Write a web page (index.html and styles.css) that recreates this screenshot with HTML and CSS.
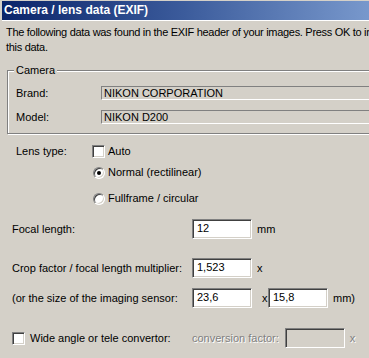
FILE: index.html
```html
<!DOCTYPE html>
<html lang="en">
  <head>
    <meta charset="UTF-8" />
    <meta name="viewport" content="width=device-width, initial-scale=1.0" />
    <title>Camera / lens data (EXIF)</title>
    <link rel="stylesheet" href="styles.css">
  </head>
  <body>
    <div class="dialog">
      <div class="title">Camera / lens data (EXIF)</div>
      <div class="intro">
        The following data was found in the EXIF header of your images. Press OK to import<br>
        this data.
      </div>

      <fieldset class="group">
        <legend>Camera</legend>
        <div class="row">
          <span class="row-label">Brand:</span>
          <span class="field">NIKON CORPORATION</span>
        </div>
        <div class="row">
          <span class="row-label">Model:</span>
          <span class="field">NIKON D200</span>
        </div>
      </fieldset>

      <div class="lens">
        <span class="lens-label">Lens type:</span>
        <div class="options">
          <div class="opt"><span class="check"></span>Auto</div>
          <div class="opt opt-2"><span class="radio"><span class="dot"></span></span>Normal (rectilinear)</div>
          <div class="opt opt-3"><span class="radio"></span>Fullframe / circular</div>
        </div>
      </div>

      <div class="form">
        <div class="frow">
          <span class="flabel">Focal length:</span>
          <span class="input">12</span>
          <span class="unit">mm</span>
        </div>
        <div class="frow frow-crop">
          <span class="flabel">Crop factor / focal length multiplier:</span>
          <span class="input">1,523</span>
          <span class="unit">x</span>
        </div>
        <div class="frow frow-sensor">
          <span class="flabel">(or the size of the imaging sensor:</span>
          <span class="input">23,6</span>
          <span class="times">x</span>
          <span class="input">15,8</span>
          <span class="unit">mm)</span>
        </div>
        <div class="frow frow-wide">
          <span class="flabel"><span class="check check-wide"></span>Wide angle or tele convertor:</span>
          <span class="disabled">conversion factor:</span>
          <span class="input input-off"></span>
          <span class="unit disabled">x</span>
        </div>
      </div>
    </div>
  </body>
</html>
```

FILE: styles.css
```css
* {
  box-sizing: border-box;
}
html,
body {
  margin: 0;
  width: 369px;
  height: 358px;
  overflow: hidden;
  background: #d4d0c8;
}
body {
  font: 11px/13px "Liberation Sans", Arial, sans-serif;
  color: #000;
}
.dialog {
  width: 369px;
  height: 358px;
  overflow: hidden;
}
.title {
  margin: 1px 0 0 2px;
  height: 20px;
  padding-left: 2px;
  line-height: 19px;
  font-size: 12px;
  font-weight: bold;
  color: #fff;
  background: linear-gradient(to right, #0a246a, #3c5c9c 50%, #7898cc);
  border-bottom: 1px solid #fff;
}
.intro {
  padding: 4px 0 0 6px;
  line-height: 15px;
  letter-spacing: -0.3px;
  white-space: nowrap;
}

/* camera group */
.group {
  width: 420px;
  margin: 9px 0 0 7px;
  padding: 9px 0 9px 8px;
  border: 1px solid #808080;
  box-shadow: inset 1px 1px #fff, 1px 1px #fff;
}
.group legend {
  padding: 0 2px;
  margin-left: -2px;
  line-height: 13px;
  background: #d4d0c8;
}
.row {
  display: flex;
  align-items: center;
  height: 14px;
}
.row + .row {
  margin-top: 10px;
}
.row-label {
  width: 85px;
}
.field {
  flex: 1;
  height: 14px;
  padding-left: 2px;
  line-height: 12px;
  border-top: 1px solid #808080;
  border-left: 1px solid #808080;
  border-bottom: 1px solid #fff;
  border-right: 1px solid #fff;
}

/* lens type */
.lens {
  display: flex;
  margin-top: 11px;
  padding-left: 16px;
}
.lens-label {
  width: 76px;
}
.opt {
  display: flex;
  align-items: center;
  height: 13px;
  white-space: nowrap;
}
.opt-2 {
  margin-top: 8px;
}
.opt-3 {
  margin-top: 13px;
}
.check {
  width: 13px;
  height: 13px;
  margin-right: 3px;
  background: #fff;
  border: 1px solid;
  border-color: #808080 #fff #fff #808080;
  box-shadow: inset 1px 1px #404040, inset -1px -1px #d4d0c8;
  flex: none;
}
.radio {
  display: flex;
  align-items: center;
  justify-content: center;
  width: 12px;
  height: 12px;
  margin: 0 3px 0 1px;
  border-radius: 50%;
  background: #fff;
  border: 1px solid;
  border-color: #808080 #fff #fff #808080;
  box-shadow: inset 1px 1px #404040, inset -1px -1px #d4d0c8;
  flex: none;
}
.dot {
  width: 4px;
  height: 4px;
  border-radius: 50%;
  background: #000;
}

/* focal length form */
.form {
  margin-top: 14px;
  padding-left: 12px;
}
.frow {
  display: flex;
  align-items: center;
  height: 20px;
  white-space: nowrap;
}
.frow-crop {
  margin-top: 19px;
}
.frow-sensor {
  margin-top: 10px;
}
.frow-wide {
  margin-top: 20px;
}
.flabel {
  display: flex;
  align-items: center;
  width: 180px;
  flex: none;
}
.check-wide {
  margin-right: 5px;
}
.input {
  width: 60px;
  height: 20px;
  padding-left: 4px;
  line-height: 16px;
  background: #fff;
  border: 1px solid;
  border-color: #808080 #fff #fff #808080;
  box-shadow: inset 1px 1px #404040, inset -1px -1px #d4d0c8;
  flex: none;
}
.input-off {
  margin-left: 6px;
  background: #d4d0c8;
}
.unit {
  margin-left: 5px;
}
.times {
  margin: 0 0 0 10px;
  width: 6px;
}
.disabled {
  color: #808080;
  text-shadow: 1px 1px #fff;
}
```
